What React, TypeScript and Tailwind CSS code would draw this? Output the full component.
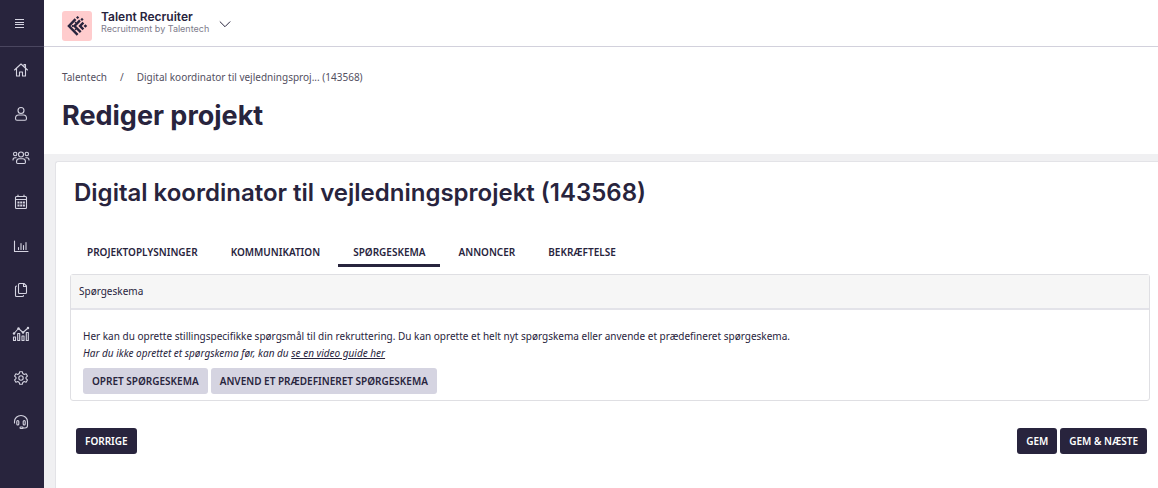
import React from 'react';

type IconProps = { children: React.ReactNode };

const Icon = ({ children }: IconProps) => (
  <svg
    className="h-[18px] w-[18px] shrink-0"
    viewBox="0 0 18 18"
    fill="none"
    stroke="currentColor"
    strokeWidth="1.1"
    strokeLinecap="round"
    strokeLinejoin="round"
    aria-hidden="true"
  >
    {children}
  </svg>
);

const navItems = [
  {
    label: 'Hjem',
    icon: (
      <>
        <path d="M2.5 9 9 3l6.5 6M4.5 7.5V15h3v-4h3v4h3V7.5" />
        <path d="M13.5 7V3.5H12V5" />
      </>
    ),
  },
  {
    label: 'Profil',
    icon: (
      <>
        <circle cx="9" cy="5.5" r="3" />
        <path d="M3.5 13.5c0-2.200 1.300-3.500 3-3.500h5c1.700 0 3 1.300 3 3.500 0 1.200-.5 1.800-1.500 1.800H5c-1 0-1.500-.6-1.500-1.800Z" />
      </>
    ),
  },
  {
    label: 'Kandidater',
    icon: (
      <>
        <circle cx="9" cy="5.5" r="2.5" />
        <circle cx="3.2" cy="5" r="1.7" />
        <circle cx="14.8" cy="5" r="1.7" />
        <path d="M4.5 13c0-2 .9-3.200 2.500-3.200h4c1.600 0 2.500 1.200 2.500 3.200 0 1-.4 1.500-1.200 1.500H5.700c-.8 0-1.200-.5-1.200-1.500Z" />
        <path d="M1 11c0-1.500.6-2.300 2-2.300h1.200M17 11c0-1.500-.6-2.300-2-2.300h-1.200" />
      </>
    ),
  },
  {
    label: 'Kalender',
    icon: (
      <>
        <rect x="3.5" y="3.5" width="11" height="12" rx="1" />
        <path d="M3.5 6.5h11M6 2v1.500M12 2v1.500" />
        <path d="M5.5 9.5H13M5.5 12.5H13" strokeWidth="2" strokeDasharray="2 .7" strokeLinecap="butt" />
      </>
    ),
  },
  {
    label: 'Statistik',
    icon: <path d="M2.5 4v10.500H16M6.500 12.500v-2M9 12.500v-6M11.500 12.500v-4M14 12.500v-7" />,
  },
  {
    label: 'Dokumenter',
    icon: (
      <>
        <path d="M7.5 2.500H12L14.500 5v6.500c0 .6-.4 1-1 1h-6c-.6 0-1-.4-1-1v-8c0-.6.4-1 1-1Z" />
        <path d="M11.5 2.500v3h3M4.500 5c-.6 0-1 .4-1 1v8.500c0 .6.4 1 1 1h6c.6 0 1-.4 1-1" />
      </>
    ),
  },
  {
    label: 'Rapporter',
    icon: (
      <>
        <rect x="1.5" y="12" width="2" height="3.5" />
        <rect x="5.7" y="8.5" width="2" height="7" />
        <rect x="10" y="11" width="2" height="4.5" />
        <rect x="14.3" y="7.5" width="2" height="8" />
        <path d="m2 8.500 4.500-5 4.500 4L16 3" />
        <g fill="currentColor" stroke="none">
          <circle cx="2" cy="8.5" r="1.2" />
          <circle cx="6.5" cy="3.5" r="1.2" />
          <circle cx="11" cy="7.5" r="1.2" />
          <circle cx="16" cy="3" r="1.2" />
        </g>
      </>
    ),
  },
  {
    label: 'Indstillinger',
    icon: (
      <>
        <circle cx="9" cy="9" r="2.2" />
        <path d="M7.700 2.700h2.600l.5 1.900 1.400.8 1.900-.6 1.300 2.300-1.400 1.300v1.200l1.400 1.300-1.300 2.300-1.900-.6-1.400.8-.5 1.900H7.700l-.5-1.900-1.400-.8-1.900.6-1.300-2.300L4 9.600V8.400L2.600 7.100l1.300-2.300 1.900.6 1.400-.8Z" />
      </>
    ),
  },
  {
    label: 'Support',
    icon: (
      <>
        <path d="M2.500 10V8.500a6.500 6 0 0 1 13 0v4c0 1.600-1 2.500-2.500 2.500h-2" />
        <rect x="4.8" y="7.5" width="2" height="4.5" rx="1" />
        <rect x="11.2" y="7.5" width="2" height="4.5" rx="1" />
        <rect x="8" y="14" width="3" height="1.5" rx=".7" />
      </>
    ),
  },
];

const tabs = ['Projektoplysninger', 'Kommunikation', 'Spørgeskema', 'Annoncer', 'Bekræftelse'];

const Logo = () => (
  <svg className="h-[30px] w-[30px]" viewBox="0 0 30 30" aria-hidden="true">
    <rect width="30" height="30" rx="3" fill="#ffcccd" />
    <g fill="none" stroke="#28243d" strokeWidth="2.4">
      <path d="M13.500 8.200 6.900 15l8.700 8.800" />
      <path d="M18 9.400 12.500 15l6.200 6.200" />
      <path d="M21.400 11.700 18.100 15l3.300 3.300" />
    </g>
    <g fill="#28243d">
      <path d="m15.600 4.900 1.600 1.600-1.600 1.600L14 6.500ZM20 6.800l1.600 1.600L20 10l-1.600-1.600ZM23.400 13.200l1.800 1.800-1.800 1.800-1.800-1.800Z" />
      <path d="m10.700 13.700 1.300 1.300-1.300 1.300L9.400 15ZM13.500 10.500l1 1-1 1-1-1ZM13.500 17.500l1 1-1 1-1-1Z" />
    </g>
  </svg>
);

type ButtonProps = { children: React.ReactNode; variant?: 'dark' | 'light' };

const Button = ({ children, variant = 'dark' }: ButtonProps) => (
  <button
    type="button"
    className={`h-[26px] rounded-[3px] px-[9px] font-semibold uppercase ${
      variant === 'dark' ? 'bg-[#28243d] text-white' : 'bg-[#d5d4e1] text-[#28243d]'
    }`}
  >
    {children}
  </button>
);

const Sidebar = () => (
  <aside className="w-11 shrink-0 bg-[#28243d] text-[#d5d4e1]">
    <button
      type="button"
      aria-label="Menu"
      className="flex h-[47px] w-full items-center justify-center border-b border-[#4a465f] pr-[5px]"
    >
      <svg className="h-[9px] w-[9px]" viewBox="0 0 9 9" stroke="currentColor" aria-hidden="true">
        <path d="M0 .5h9M0 3.500h9M0 5.500h9M0 8.500h9" />
      </svg>
    </button>
    <nav className="flex flex-col pt-px">
      {navItems.map(({ label, icon }) => (
        <a key={label} href="#" aria-label={label} className="flex h-11 items-center justify-center pr-0.5">
          <Icon>{icon}</Icon>
        </a>
      ))}
    </nav>
  </aside>
);

const App: React.FC = () => {
  return (
    <div className="flex min-h-screen bg-white font-['Noto_Sans',sans-serif] text-[10px] text-[#28243d]">
      <Sidebar />

      <div className="flex min-w-0 flex-1 flex-col">
        <header className="flex h-[47px] items-center border-b border-[#d2d1dc] pt-1.5 pl-[18px]">
          <Logo />
          <div className="ml-[9px] pb-1.5 font-[Inter,sans-serif]">
            <div className="text-[12px] leading-3 font-semibold">Talent Recruiter</div>
            <div className="text-[9px] leading-3 text-[#7e7b8b]">Recruitment by Talentech</div>
          </div>
          <button type="button" aria-label="Skift produkt" className="ml-2.5 pb-1">
            <svg className="h-3 w-3" viewBox="0 0 12 12" fill="none" stroke="currentColor" aria-hidden="true">
              <path d="m.8 3.500 5.200 5.200 5.200-5.200" />
            </svg>
          </button>
        </header>

        <div className="px-[18px] pt-5 pb-[22px]">
          <nav aria-label="Brødkrumme" className="flex gap-[13px] leading-5 text-[#53505f]">
            <a href="#">Talentech</a>
            <span>/</span>
            <a href="#">Digital koordinator til vejledningsproj... (143568)</a>
          </nav>
          <h1 className="mt-[13px] font-[Inter,sans-serif] text-[27px] leading-8 font-bold">Rediger projekt</h1>
        </div>

        <main className="flex flex-1 flex-col bg-[#f0f0f2] pt-[7px] pl-[11px]">
          <section className="flex-1 rounded-tl-[3px] border-t border-l border-[#e3e3e7] bg-white pr-2 pl-3.5">
            <h2 className="mt-[13px] px-1 font-[Inter,sans-serif] text-[24px] leading-9 font-semibold">
              Digital koordinator til vejledningsprojekt (143568)
            </h2>

            <div role="tablist" className="mt-7 flex gap-[3px] pl-0.5">
              {tabs.map((tab) => (
                <button
                  key={tab}
                  type="button"
                  role="tab"
                  aria-selected={tab === 'Spørgeskema'}
                  className={`h-7 border-b-[3px] px-[15px] pt-px font-semibold uppercase ${
                    tab === 'Spørgeskema' ? 'border-[#28243d]' : 'border-transparent'
                  }`}
                >
                  {tab}
                </button>
              ))}
            </div>

            <div className="mt-[7px] rounded-[3px] border border-[#dfdfe3]">
              <h3 className="border-b-2 border-[#e3e3e9] bg-[#f6f6f6] px-2 leading-[33px]">Spørgeskema</h3>
              <div className="px-3 pt-[18px] pb-1.5">
                <p className="leading-[17px]">
                  Her kan du oprette stillingspecifikke spørgsmål til din rekruttering. Du kan oprette et helt nyt
                  spørgskema eller anvende et prædefineret spørgeskema.
                </p>
                <p className="leading-[17px] italic">
                  Har du ikke oprettet et spørgskema før, kan du{' '}
                  <a href="#" className="underline">se en video guide her</a>
                </p>
                <div className="mt-1.5 flex gap-[3px]">
                  <Button variant="light">Opret spørgeskema</Button>
                  <Button variant="light">Anvend et prædefineret spørgeskema</Button>
                </div>
              </div>
            </div>

            <div className="mt-[27px] flex gap-[3px] pr-[3px] pb-8 pl-1.5">
              <div className="flex-1">
                <Button>Forrige</Button>
              </div>
              <Button>Gem</Button>
              <Button>Gem &amp; næste</Button>
            </div>
          </section>
        </main>
      </div>
    </div>
  );
};

export default App;
